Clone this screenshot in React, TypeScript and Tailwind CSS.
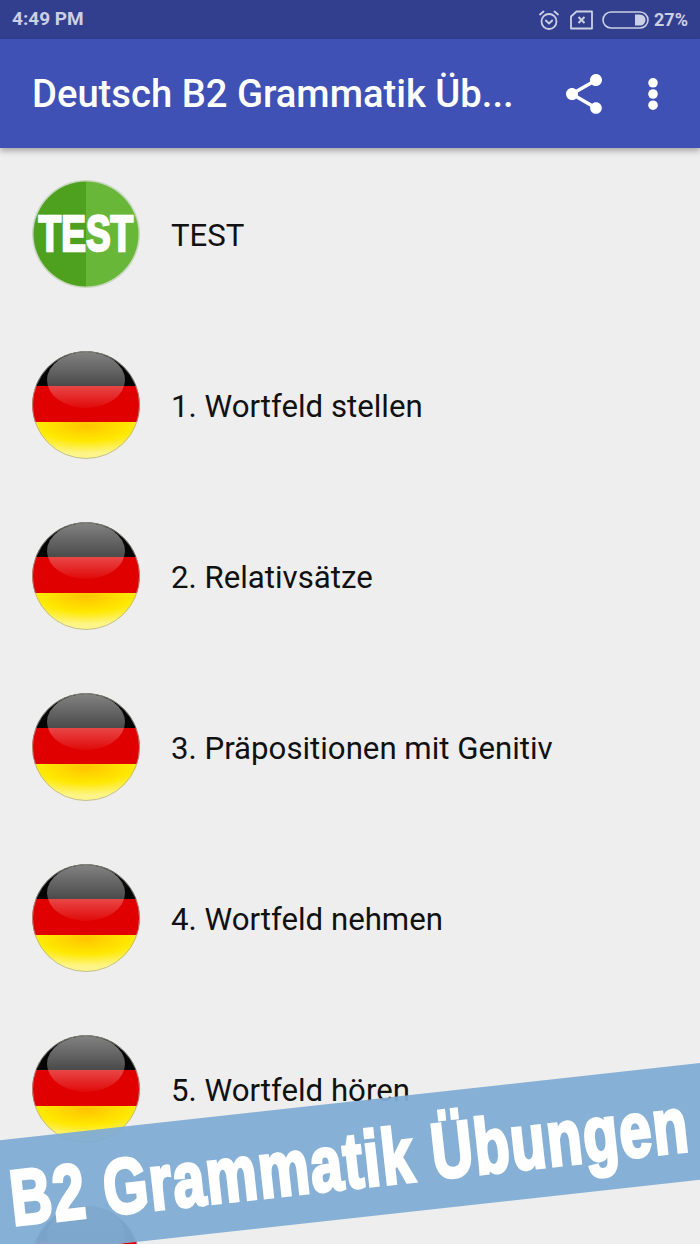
import React from "react";

const lessons = [
  "1. Wortfeld stellen",
  "2. Relativsätze",
  "3. Präpositionen mit Genitiv",
  "4. Wortfeld nehmen",
  "5. Wortfeld hören",
  "6. Wortfeld sehen",
];

const TestIcon = () => {
  return (
    <svg width="108" height="108" viewBox="0 0 108 108" className="shrink-0">
      <circle cx="54" cy="54" r="54" fill="#c9d8c0" />
      <path d="M54 1.5A52.5 52.5 0 0 0 54 106.5Z" fill="#4ea11e" />
      <path d="M54 1.5A52.5 52.5 0 0 1 54 106.5Z" fill="#69b738" />
    </svg>
  );
};

const FlagIcon = () => {
  return (
    <svg width="108" height="108" viewBox="0 0 108 108" className="shrink-0">
      <defs>
        <clipPath id="flagClip">
          <circle cx="54" cy="54" r="53.8" />
        </clipPath>
        <radialGradient id="goldGlow" cx="50%" cy="10%" r="75%">
          <stop offset="0%" stopColor="#ffc400" />
          <stop offset="55%" stopColor="#ffe800" />
          <stop offset="100%" stopColor="#fdf58a" />
        </radialGradient>
        <linearGradient id="gloss" x1="0" y1="0" x2="0" y2="1">
          <stop offset="0%" stopColor="#ffffff" stopOpacity="0.5" />
          <stop offset="60%" stopColor="#ffffff" stopOpacity="0.28" />
          <stop offset="100%" stopColor="#ffffff" stopOpacity="0.04" />
        </linearGradient>
      </defs>
      <g clipPath="url(#flagClip)">
        <rect width="108" height="35" fill="#050505" />
        <rect y="35" width="108" height="36" fill="#e00000" />
        <rect y="71" width="108" height="37" fill="url(#goldGlow)" />
        <ellipse cx="54" cy="29" rx="39" ry="28" fill="url(#gloss)" />
      </g>
      <circle cx="54" cy="54" r="53.5" fill="none" stroke="#a8a89a" strokeOpacity="0.7" />
    </svg>
  );
};

const StatusIcons = () => {
  return (
    <div className="flex items-center gap-[10px] text-[#ccd0e4]">
      <svg width="22" height="22" viewBox="0 0 22 22" fill="none" stroke="currentColor" strokeWidth="1.8">
        <circle cx="11" cy="12.5" r="7.5" />
        <path d="M7.8 11.5l3.2 3 3.2-3" strokeLinecap="round" strokeLinejoin="round" />
        <path d="M2 5.5L5.5 2.5M20 5.5L16.5 2.5" strokeLinecap="round" />
      </svg>
      <svg width="23" height="20" viewBox="0 0 23 20" fill="none" stroke="currentColor" strokeWidth="1.8">
        <path d="M1 18.5V6.5L6.5 1.5H22V18.5Z" strokeLinejoin="round" />
        <path d="M8.5 7l6 6M14.5 7l-6 6" strokeWidth="2" />
      </svg>
      <svg width="47" height="18" viewBox="0 0 47 18" fill="none" className="ml-[-1px]">
        <rect x="1" y="1" width="45" height="16" rx="8" stroke="currentColor" strokeWidth="1.6" />
        <path d="M33 3.5H38A5.5 5.5 0 0 1 38 14.5H33Z" fill="currentColor" />
      </svg>
    </div>
  );
};

const App = () => {
  return (
    <div className="relative h-[1244px] w-[700px] overflow-hidden bg-[#eeeeee] font-['Roboto',sans-serif]">
      <div className="flex h-[39px] items-center justify-between bg-[#323f8f] pl-3 pr-[12px]">
        <span className="text-[19px] font-bold text-[#ccd0e4]">4:49 PM</span>
        <div className="flex items-center gap-[5px]">
          <StatusIcons />
          <span className="text-[18px] font-bold text-[#ccd0e4]">27%</span>
        </div>
      </div>

      <div className="relative z-10 flex h-[109px] items-center bg-[#3f51b5] pl-8 shadow-[0_3px_6px_rgba(0,0,0,0.3)]">
        <h1 className="mt-[3px] w-[484px] whitespace-nowrap text-[38.2px] font-medium text-white">Deutsch B2 Grammatik Üb...</h1>
        <svg width="48" height="48" viewBox="0 0 24 24" fill="white" className="ml-[44px]">
          <path d="M18 16.08c-.76 0-1.44.3-1.96.77L8.91 12.7c.05-.23.09-.46.09-.7s-.04-.47-.09-.7l7.05-4.11c.54.5 1.25.81 2.04.81 1.66 0 3-1.34 3-3s-1.34-3-3-3-3 1.34-3 3c0 .24.04.47.09.7L8.04 9.81C7.5 9.31 6.79 9 6 9c-1.66 0-3 1.34-3 3s1.34 3 3 3c.79 0 1.5-.31 2.04-.81l7.12 4.16c-.05.21-.08.43-.08.65 0 1.61 1.31 2.92 2.92 2.92 1.61 0 2.92-1.31 2.92-2.92s-1.31-2.92-2.92-2.92z" />
        </svg>
        <svg width="48" height="48" viewBox="0 0 24 24" fill="white" className="ml-[21px]">
          <circle cx="12" cy="6.4" r="2.4" />
          <circle cx="12" cy="12" r="2.4" />
          <circle cx="12" cy="17.6" r="2.4" />
        </svg>
      </div>

      <div className="flex flex-col">
        <div className="flex h-[171px] items-start gap-[31px] pl-8 pt-8">
          <div className="relative h-[108px] w-[108px] shrink-0">
            <TestIcon />
            <span className="absolute inset-0 flex items-center justify-center font-['Liberation_Sans',sans-serif] text-[50px] font-bold text-white [-webkit-text-stroke:2.5px_white]">
              <span className="inline-block scale-x-[0.74] whitespace-nowrap">TEST</span>
            </span>
          </div>
          <span className="flex h-[108px] items-center pt-[4px] text-[31.2px] text-[#111111]">TEST</span>
        </div>
        {lessons.map((lesson) => (
          <div key={lesson} className="flex h-[171px] items-start gap-[31px] pl-8 pt-8">
            <FlagIcon />
            <span className="flex h-[108px] items-center pt-[4px] text-[31.2px] text-[#111111]">{lesson}</span>
          </div>
        ))}
      </div>

      <div className="absolute left-[-50px] top-[1102px] z-20 flex h-[116px] w-[800px] -rotate-[6.3deg] items-center bg-[#7facd3]/95 pt-[3px]">
        <span className="ml-[58px] inline-block origin-left scale-x-[0.735] whitespace-nowrap font-['Liberation_Sans',sans-serif] text-[78px] font-bold tracking-[2px] text-white [-webkit-text-stroke:3.5px_white]">
          B2 Grammatik Übungen
        </span>
      </div>
    </div>
  );
};

export default App;
